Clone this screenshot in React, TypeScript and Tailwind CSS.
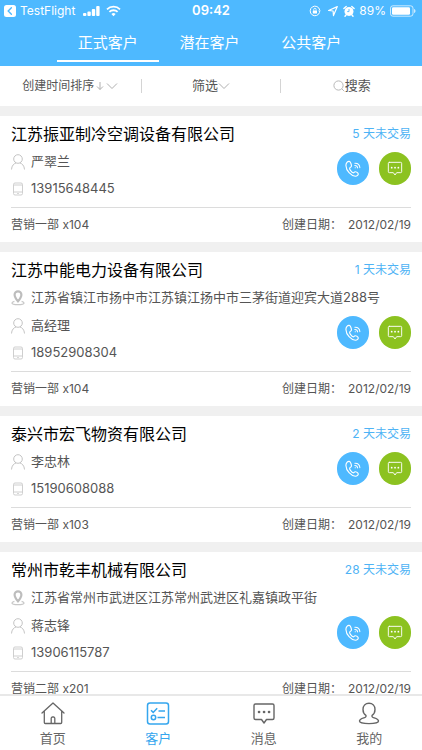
import { useState } from "react";
import clsx from "clsx";

type Customer = {
    company: string;
    address?: string;
    contact: string;
    phone: string;
    department: string;
    idleDays: number;
    createdAt: string;
};

const customers: Customer[] = [
    { company: "江苏振亚制冷空调设备有限公司", contact: "严翠兰", phone: "13915648445", department: "营销一部 x104", idleDays: 5, createdAt: "2012/02/19" },
    { company: "江苏中能电力设备有限公司", address: "江苏省镇江市扬中市江苏镇江扬中市三茅街道迎宾大道288号", contact: "高经理", phone: "18952908304", department: "营销一部 x104", idleDays: 1, createdAt: "2012/02/19" },
    { company: "泰兴市宏飞物资有限公司", contact: "李忠林", phone: "15190608088", department: "营销一部 x103", idleDays: 2, createdAt: "2012/02/19" },
    { company: "常州市乾丰机械有限公司", address: "江苏省常州市武进区江苏常州武进区礼嘉镇政平街", contact: "蒋志锋", phone: "13906115787", department: "营销二部 x201", idleDays: 28, createdAt: "2012/02/19" },
];

const tabs = ["正式客户", "潜在客户", "公共客户"];

function StatusBar() {
    return (
        <div className="grid h-5 grid-cols-3 items-center pt-px text-white">
            <div className="flex items-center pl-1">
                <svg className="h-3 w-3" viewBox="0 0 12 12" aria-hidden="true">
                    <rect width="12" height="12" rx="2.5" fill="white" />
                    <path d="M7.4 2.8 4.2 6l3.2 3.2" fill="none" stroke="#4eb9ff" strokeWidth="1.4" strokeLinecap="round" />
                </svg>
                <span className="ml-1 text-xs">TestFlight</span>
                <svg className="ml-2 h-3 w-[17px]" viewBox="0 0 17 12" fill="white" aria-hidden="true">
                    <rect x="0" y="8" width="3.4" height="3" rx="1" />
                    <rect x="4.4" y="6.5" width="3.4" height="4.5" rx="1" />
                    <rect x="8.8" y="4" width="3.4" height="7" rx="1" />
                    <rect x="13.2" y="1" width="3.4" height="10" rx="1" />
                </svg>
                <svg className="ml-1.5 h-3 w-[15px]" viewBox="0 0 15 12" fill="none" stroke="white" strokeWidth="1.8" aria-hidden="true">
                    <path d="M1 4.3a9.3 9.3 0 0 1 13 0" />
                    <path d="M3.4 6.9a5.9 5.9 0 0 1 8.2 0" />
                    <path d="M7.5 11.2 5.4 9a3 3 0 0 1 4.2 0z" fill="white" stroke="none" />
                </svg>
            </div>
            <span className="text-center text-[13px] font-semibold">09:42</span>
            <div className="flex items-center justify-end pr-1.5">
                <svg className="h-3 w-3" viewBox="0 0 12 12" fill="none" stroke="white" aria-hidden="true">
                    <path d="M10.6 7.3A4.8 4.8 0 1 1 10.7 5" />
                    <path d="M9.2 5.4h2.6l-1.3 1.8z" fill="white" stroke="none" />
                    <rect x="3.8" y="5.4" width="4.2" height="3.1" rx=".5" fill="white" stroke="none" />
                    <path d="M4.7 5.6V4.5a1.2 1.2 0 0 1 2.4 0v1.1" strokeWidth=".8" />
                </svg>
                <svg className="ml-1.5 h-3 w-3" viewBox="0 0 12 12" fill="none" stroke="white" strokeWidth="1.2" strokeLinejoin="round" aria-hidden="true">
                    <path d="M10.3 1.6 1.6 5.5l4.5.5.4 4.6z" />
                </svg>
                <svg className="ml-1 h-3 w-3" viewBox="0 0 12 12" aria-hidden="true">
                    <circle cx="6" cy="6.4" r="4.5" fill="white" />
                    <path d="M.9 3.5 3.2 1.4M11.1 3.5 8.8 1.4M3 10l-1 1.2M9 10l1 1.2" stroke="white" strokeWidth="1.4" strokeLinecap="round" />
                    <path d="M6 4v2.6H4.2" fill="none" stroke="#4eb9ff" strokeWidth=".9" />
                </svg>
                <span className="ml-1 text-xs">89%</span>
                <svg className="ml-1 h-3 w-[26px]" viewBox="0 0 26 12" aria-hidden="true">
                    <rect x=".5" y=".8" width="22.5" height="10.4" rx="2.4" fill="none" stroke="white" strokeOpacity=".7" />
                    <rect x="2" y="2.3" width="18" height="7.4" rx="1.2" fill="white" />
                    <path d="M24 4v4c1-.3 1.5-1.1 1.5-2S25 4.3 24 4z" fill="white" fillOpacity=".7" />
                </svg>
            </div>
        </div>
    );
}

function ChevronIcon() {
    return (
        <svg className="h-2 w-3" viewBox="0 0 12 8" fill="none" stroke="#b0b0b0" aria-hidden="true">
            <path d="M1 1.5 6 6.5l5-5" />
        </svg>
    );
}

function PinIcon() {
    return (
        <svg className="h-4 w-3.5" viewBox="0 0 14 16" fill="none" aria-hidden="true">
            <path d="M7 1.3a3.4 3.4 0 0 0-3.4 3.4C3.6 7.300 7 11.300 7 11.300s3.400-4 3.400-6.600A3.400 3.400 0 0 0 7 1.300z" stroke="#bdbdbd" strokeWidth="2.2" />
            <path d="M3.400 11.300C2 11.700 1 12.200 1 12.900c0 1.200 2.700 1.800 6 1.800s6-.6 6-1.800c0-.7-1-1.200-2.400-1.600" stroke="#c8c8c8" strokeWidth="1.300" />
        </svg>
    );
}

function PersonIcon() {
    return (
        <svg className="h-4 w-3.5" viewBox="0 0 14 16" fill="none" stroke="#c4c4c4" aria-hidden="true">
            <circle cx="7" cy="5" r="4.300" />
            <path d="M.5 15.500C.7 11.500 3 9.500 5.200 8.900M13.500 15.500c-.2-4-2.500-6-4.700-6.600" />
        </svg>
    );
}

function MobileIcon() {
    return (
        <svg className="h-4 w-3.5" viewBox="0 0 14 16" fill="none" stroke="#cfcfcf" aria-hidden="true">
            <rect x="2.500" y="2" width="9" height="12" rx="1.500" />
            <path d="M2.500 4h9M2.500 11h9M6.200 12.500h1.600" />
        </svg>
    );
}

function CallIcon() {
    return (
        <svg className="h-[18px] w-[18px]" viewBox="0 0 16 16" fill="none" stroke="white" strokeLinecap="round" strokeLinejoin="round" aria-hidden="true">
            <path d="M4.700 1.200C3.200 1 1.700 2.500 1.700 4.800c.2 4.800 4.500 9.400 8.400 9.600 1.600 0 2.900-1.300 2.500-2.300-.4-.8-2-1.800-2.700-1.700-.8.1-1.100 1.100-1.700 1-1.300-.3-3.300-2.800-3.200-4.100.1-.8 1.500-.9 1.600-1.800C6.800 4.500 5.900 1.400 4.700 1.200z" />
            <path d="M9.600 2.800c2.500-.1 4.300 1.500 4.500 4M9.600 4.800c1.500 0 2.400.8 2.500 2.200M9.900 6.800h.2" strokeWidth=".9" />
        </svg>
    );
}

function MessageIcon({ className }: { className: string }) {
    return (
        <svg className={className} viewBox="0 0 24 24" fill="none" stroke="currentColor" strokeLinejoin="round" strokeLinecap="round" aria-hidden="true">
            <path d="M3.500 2h17A1.500 1.500 0 0 1 22 3.500V16a1.500 1.500 0 0 1-1.500 1.500H14.500L12 21 9.500 17.500h-6A1.500 1.500 0 0 1 2 16V3.500A1.500 1.500 0 0 1 3.500 2z" strokeWidth="1.400" />
            <path d="M7 10h.1M12 10h.1M17 10h.1" strokeWidth="2.600" />
        </svg>
    );
}

function CustomerCard({ customer }: { customer: Customer }) {
    return (
        <article className="bg-white px-[11px] pt-1">
            <div className="flex h-7 items-center justify-between">
                <h2 className="text-base text-black">{customer.company}</h2>
                <span className="text-xs text-[#4eb3f5]">{customer.idleDays} 天未交易</span>
            </div>
            {customer.address && (
                <p className="flex h-7 items-center gap-1.5 whitespace-nowrap">
                    <PinIcon />
                    {customer.address}
                </p>
            )}
            <div className="flex items-start justify-between pb-[5px]">
                <div>
                    <p className="flex h-[27px] items-center gap-1.5">
                        <PersonIcon />
                        {customer.contact}
                    </p>
                    <p className="flex h-[27px] items-center gap-1.5">
                        <MobileIcon />
                        {customer.phone}
                    </p>
                </div>
                <div className="mt-1 flex gap-2.5">
                    <button aria-label="拨打电话" className="flex h-[33px] w-8 items-center justify-center rounded-full bg-[#4eb9ff]">
                        <CallIcon />
                    </button>
                    <button aria-label="发送消息" className="flex h-[33px] w-8 items-center justify-center rounded-full bg-[#8cc220] text-white">
                        <MessageIcon className="h-4 w-4" />
                    </button>
                </div>
            </div>
            <div className="flex h-[35px] items-center justify-between border-t border-[#dcdcdc] text-xs">
                <span>{customer.department}</span>
                <span className="flex">
                    <span>创建日期：</span>
                    <time className="ml-1.5">{customer.createdAt}</time>
                </span>
            </div>
        </article>
    );
}

function BottomNav() {
    const items = [
        {
            name: "首页",
            icon: (
                <svg className="h-6 w-6" viewBox="0 0 24 24" fill="none" stroke="currentColor" strokeWidth="1.300" strokeLinejoin="round" strokeLinecap="round" aria-hidden="true">
                    <path d="M1 11 12 1l11 10M3.300 9.100V20.500a1 1 0 0 0 1 1h15.400a1 1 0 0 0 1-1V9.100" />
                    <path d="M10.200 21.300v-5a1.300 1.300 0 0 1 1.300-1.300h1a1.300 1.300 0 0 1 1.300 1.300v5" />
                </svg>
            ),
        },
        {
            name: "客户",
            icon: (
                <svg className="h-6 w-6" viewBox="0 0 24 24" fill="none" stroke="currentColor" strokeWidth="1.500" aria-hidden="true">
                    <rect x="1.500" y="1" width="21" height="21" rx="2.500" />
                    <path d="m5 8.200 2.200 2.200 4-4.200M12.500 9h6.500M11.500 15.500h7.500" />
                    <circle cx="7.500" cy="15.500" r="2.200" />
                </svg>
            ),
        },
        { name: "消息", icon: <MessageIcon className="h-6 w-6" /> },
        {
            name: "我的",
            icon: (
                <svg className="h-6 w-6" viewBox="0 0 24 24" fill="none" stroke="currentColor" strokeWidth="1.400" strokeLinejoin="round" aria-hidden="true">
                    <path d="M12 1.200c-3.600 0-6 2.600-6 6.200 0 2.600 1.100 4.700 2.900 5.900.5 1.300-.2 2-2.100 2.600C4 16.800 2.500 17.800 2.500 19.100c0 1.900 4 2.500 9.500 2.500s9.500-.6 9.500-2.500c0-1.300-1.500-2.300-4.300-3.200-1.900-.6-2.600-1.300-2.100-2.600C16.900 12.100 18 10 18 7.400c0-3.600-2.400-6.200-6-6.200z" />
                </svg>
            ),
        },
    ];

    return (
        <nav className="grid shrink-0 grid-cols-4 border-t-2 border-[#e8e8e8] bg-white pt-1.5 pb-0.5">
            {items.map((item) => (
                <a
                    key={item.name}
                    href="#"
                    className={clsx(
                        "flex flex-col items-center gap-0.5 text-[13px] leading-5",
                        item.name === "客户" ? "text-[#35a6ee]" : "text-[#666]",
                    )}
                >
                    {item.icon}
                    {item.name}
                </a>
            ))}
        </nav>
    );
}

export default function App() {
    const [activeTab, setActiveTab] = useState(tabs[0]);

    return (
        <div className="flex h-screen flex-col bg-[#f0f0f0] font-[Inter,'Noto_Sans_CJK_SC',sans-serif] text-[13px] text-[#555]">
            <header className="shrink-0 bg-[#4eb9ff] pb-1">
                <StatusBar />
                <div className="grid grid-cols-3 pr-[60px] pl-[57px]">
                    {tabs.map((tab) => (
                        <button
                            key={tab}
                            onClick={() => setActiveTab(tab)}
                            className={clsx(
                                "h-[42px] border-b-2 pt-1.5 text-[15px] text-white",
                                tab === activeTab ? "border-white" : "border-transparent",
                            )}
                        >
                            {tab}
                        </button>
                    ))}
                </div>
            </header>

            <div className="grid h-10 shrink-0 grid-cols-3 items-center bg-white">
                <button className="flex items-center justify-center text-xs">
                    创建时间排序
                    <svg className="mx-0.5 h-2.5 w-2" viewBox="0 0 8 10" fill="none" stroke="#b0b0b0" aria-hidden="true">
                        <path d="M4 1v7.500M1 5.500l3 3 3-3" />
                    </svg>
                    <ChevronIcon />
                </button>
                <button className="flex h-3.5 items-center justify-center border-x border-[#d4d4d4]">
                    筛选
                    <ChevronIcon />
                </button>
                <button className="flex items-center justify-center">
                    <svg className="h-3 w-3" viewBox="0 0 12 12" fill="none" stroke="#b8b8b8" aria-hidden="true">
                        <circle cx="5.500" cy="5.500" r="4.600" />
                        <path d="m8.900 8.900 2.400 2.400" />
                    </svg>
                    搜索
                </button>
            </div>

            <main className="mt-2.5 flex min-h-0 flex-1 flex-col gap-2.5 overflow-y-auto [scrollbar-width:none]">
                {customers.map((customer) => (
                    <CustomerCard key={customer.company} customer={customer} />
                ))}
            </main>

            <BottomNav />
        </div>
    );
}
